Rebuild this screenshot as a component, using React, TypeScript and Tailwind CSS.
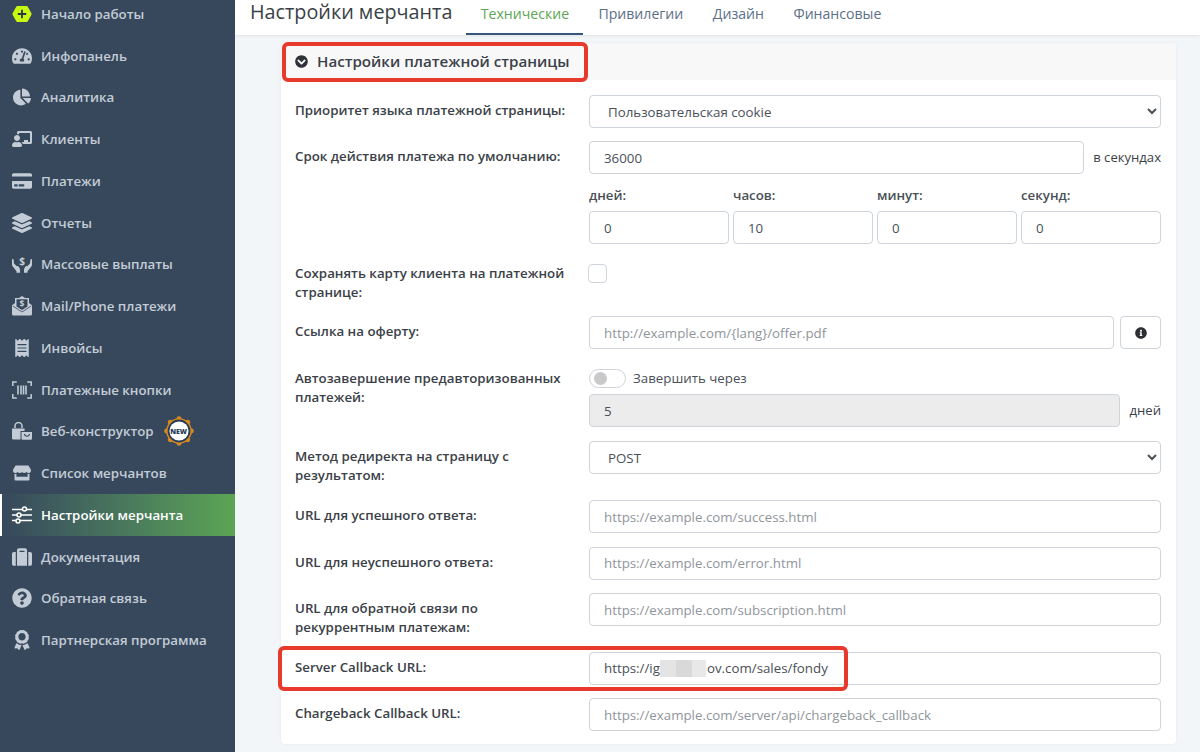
import React from "react";
import {
  FaTachometerAlt, FaChartPie, FaChalkboardTeacher, FaCreditCard, FaLayerGroup, FaReceipt, FaStore,
  FaSuitcase, FaQuestionCircle, FaAward, FaChevronCircleDown, FaInfoCircle,
} from "react-icons/fa";

const Hexagon = () => (
  <svg width="20" height="18" viewBox="0 0 20 18">
    <path d="M5.5 1h9a1.500 1.500 0 0 1 1.300.7l3.600 6.500a1.600 1.600 0 0 1 0 1.600l-3.600 6.500a1.500 1.500 0 0 1-1.300.7h-9a1.500 1.500 0 0 1-1.300-.7L.6 9.800a1.600 1.600 0 0 1 0-1.600l3.600-6.500A1.500 1.500 0 0 1 5.500 1z" fill="#c8f812" />
    <path d="M10 4.800v8.400M5.800 9h8.400" stroke="#26384a" strokeWidth="1.800" />
  </svg>
);
const Hands = () => (
  <svg width="20" height="18" viewBox="0 0 20 18" fill="currentColor">
    <path d="M0 4.500c0-.8 1.400-.8 1.600 0l.4 4 2.800 2.800c.4-.6 1.300-.3 1.900.4.900 1 1.300 2 1.300 3v3H4.500v-1.500L.8 11.500C.3 11 0 10 0 9.500z" />
    <path d="M20 4.500c0-.8-1.400-.8-1.600 0l-.4 4-2.800 2.800c-.4-.6-1.300-.3-1.900.4-.9 1-1.300 2-1.300 3v3h3.500v-1.500l3.700-4.500c.5-.5.800-1.500.8-2z" />
    <text x="10" y="10" textAnchor="middle" fontSize="10" fontWeight="700" fontFamily="Open Sans">$</text>
  </svg>
);
const EnvelopeDollar = () => (
  <svg width="20" height="20" viewBox="0 0 20 20" fill="currentColor">
    <path d="M10 0l3 2h4v5l3 2.200V18a1.500 1.500 0 0 1-1.500 1.500h-17A1.500 1.500 0 0 1 0 18V9.200L3 7V2h4z" />
    <path d="M4.500 3.300h11v7.200L10 14 4.500 10.500z" fill="#37485c" />
    <path d="M.8 10l9.200 6 9.200-6" fill="none" stroke="#37485c" strokeWidth=".8" />
    <text x="10" y="10.800" textAnchor="middle" fontSize="8.500" fontWeight="700" fontFamily="Open Sans">$</text>
  </svg>
);
const Scan = () => (
  <svg width="20" height="18" viewBox="0 0 20 18" fill="none" stroke="currentColor" strokeWidth="1.500">
    <path d="M.8 5V1h4M15.200 1h4v4M19.200 13v4h-4M4.800 17h-4v-4" />
    <path d="M6 4.500v9M9 4.500v9M11.500 4.500v9M14 4.500v9" strokeWidth="1.600" />
  </svg>
);
const BagLock = () => (
  <svg width="20" height="18" viewBox="0 0 20 18" fill="currentColor">
    <path d="M3 6V4a3.500 3.500 0 0 1 7 0v2" fill="none" stroke="currentColor" strokeWidth="1.500" />
    <path d="M0 6.500h12.500V9H8.500v8.500H1.200A1.200 1.200 0 0 1 0 16.300z" />
    <path d="M9.500 10H20v6.500a1.200 1.200 0 0 1-1.200 1.200h-8.100a1.200 1.200 0 0 1-1.200-1.200z" />
    <path d="M12.500 12c.3 3 4.700 3 5 0" fill="none" stroke="#37485c" strokeWidth="1.100" />
  </svg>
);
const Sliders = () => (
  <svg width="20" height="18" viewBox="0 0 20 18" fill="none" stroke="currentColor">
    <path d="M0 3.500h20M0 9h20M0 14.500h20" strokeWidth="1.700" />
    <g fill="#47614f" strokeWidth="1.500">
      <circle cx="12.500" cy="3" r="2" />
      <circle cx="7" cy="9" r="2" />
      <circle cx="6" cy="15" r="2" />
    </g>
  </svg>
);
const NewBadge = () => (
  <span className="relative ml-[10px] flex h-[30px] w-[30px] items-center justify-center">
    <svg className="absolute inset-0" width="30" height="30" viewBox="0 0 30 30">
      <circle cx="15" cy="15" r="12.800" fill="#d98a1e" />
      <g fill="#d98a1e">
        <circle cx="15" cy="2.600" r="2.400" /><circle cx="15" cy="27.400" r="2.400" /><circle cx="2.600" cy="15" r="2.400" /><circle cx="27.400" cy="15" r="2.400" />
        <circle cx="6.200" cy="6.200" r="2.400" /><circle cx="23.800" cy="6.200" r="2.400" /><circle cx="6.200" cy="23.800" r="2.400" /><circle cx="23.800" cy="23.800" r="2.400" />
      </g>
      <circle cx="15" cy="15" r="11.400" fill="#263c59" />
      <circle cx="15" cy="15" r="9.600" fill="#ffffff" />
    </svg>
    <span className="relative text-[7px] font-extrabold leading-none text-[#263c59]">NEW</span>
  </span>
);

const nav: { label: string; icon: React.ReactNode; badge?: boolean; active?: boolean }[] = [
  { label: "Начало работы", icon: <Hexagon /> },
  { label: "Инфопанель", icon: <FaTachometerAlt size={20} /> },
  { label: "Аналитика", icon: <FaChartPie size={18} /> },
  { label: "Клиенты", icon: <FaChalkboardTeacher size={20} /> },
  { label: "Платежи", icon: <FaCreditCard size={20} /> },
  { label: "Отчеты", icon: <FaLayerGroup size={20} /> },
  { label: "Массовые выплаты", icon: <Hands /> },
  { label: "Mail/Phone платежи", icon: <EnvelopeDollar /> },
  { label: "Инвойсы", icon: <FaReceipt size={18} /> },
  { label: "Платежные кнопки", icon: <Scan /> },
  { label: "Веб-конструктор", icon: <BagLock />, badge: true },
  { label: "Список мерчантов", icon: <FaStore size={18} /> },
  { label: "Настройки мерчанта", icon: <Sliders />, active: true },
  { label: "Документация", icon: <FaSuitcase size={20} /> },
  { label: "Обратная связь", icon: <FaQuestionCircle size={20} /> },
  { label: "Партнерская программа", icon: <FaAward size={20} /> },
];

const inputCls =
  "h-[33px] w-full rounded-[4px] border border-[#ced4da] bg-white px-[14px] text-[13.3px] text-[#495057] outline-none placeholder:text-[#8f959b]";

const Label = ({ children, className = "" }: { children: React.ReactNode; className?: string }) => (
  <div className={`w-[294px] shrink-0 pr-3 text-[13.3px] font-semibold leading-[19px] text-[#3b4148] ${className}`}>{children}</div>
);
const Row = ({ children, className = "" }: { children: React.ReactNode; className?: string }) => (
  <div className={`flex ${className}`}>{children}</div>
);
const Select = ({ value }: { value: string }) => (
  <select defaultValue={value} className={`${inputCls} !pl-[14px] !pr-[6px]`}>
    <option>{value}</option>
  </select>
);

export default function App() {
  return (
    <div className="flex h-[752px] w-[1200px] overflow-hidden bg-[#f3f6f9] font-['Open_Sans',sans-serif]">
      <aside className="h-full w-[235px] shrink-0 overflow-hidden bg-[#37485c]">
        <nav className="-mt-[7px] flex flex-col">
          {nav.map((n) => (
            <div
              key={n.label}
              className={`flex h-[41.75px] items-center pl-[12px] text-[13.3px] font-semibold ${
                n.active
                  ? "border-l-2 border-white !pl-[10px] bg-gradient-to-r from-[#37485c] to-[#5ba553] text-white"
                  : "text-[#c3ccd6]"
              }`}
            >
              <span className="flex w-[29px] shrink-0 justify-start">
                <span className="flex w-[20px] justify-center">{n.icon}</span>
              </span>
              <span className="pt-[2px]">{n.label}</span>
              {n.badge && <NewBadge />}
            </div>
          ))}
        </nav>
      </aside>

      <main className="flex min-w-0 flex-1 flex-col">
        <header className="flex h-[35px] items-center bg-white pl-[15px] shadow-[0_1px_3px_rgba(0,0,0,0.08)]">
          <h1 className="relative top-[-6px] mr-[14px] text-[19.8px] font-normal leading-[20px] text-[#3a3f45]">Настройки мерчанта</h1>
          <div className="flex h-full items-start">
            <span className="h-full w-[117px] border-b-2 border-[#37567a] pt-[3px] text-center text-[14.1px] text-[#5ba553]">Технические</span>
            <span className="pl-[15px] pr-[15px] pt-[3px] text-[14.1px] text-[#5b6f87]">Привилегии</span>
            <span className="pl-[14.5px] pr-[15px] pt-[3px] text-[14.1px] text-[#5b6f87]">Дизайн</span>
            <span className="pl-[14.5px] pt-[3px] text-[14.1px] text-[#5b6f87]">Финансовые</span>
          </div>
        </header>

        <section className="ml-[46px] mt-[8px] h-[701px] w-[895px] rounded-[4px] bg-white shadow-[0_0_3px_rgba(0,0,0,0.06)]">
          <div className="relative flex h-[37px] items-center bg-[#f8f8f8] pl-[14px] text-[15.15px] font-semibold text-[#3b4148]">
            <FaChevronCircleDown size={13} className="mr-[9px] text-[#2f3338]" />
            Настройки платежной страницы
            <div className="absolute left-[1px] top-[-1px] h-[40px] w-[306px] rounded-[6px] border-[4px] border-[#e8392d]" />
          </div>

          <div className="px-[14px] pt-[15px]">
            <Row className="h-[46px] w-[866px]">
              <Label className="pt-[6px]">Приоритет языка платежной страницы:</Label>
              <div className="w-[572px]"><Select value="Пользовательская cookie" /></div>
            </Row>
            <Row className="h-[123px] w-[866px]">
              <Label className="pt-[6px]">Срок действия платежа по умолчанию:</Label>
              <div className="w-[572px]">
                <div className="flex items-center gap-[9px]">
                  <input readOnly value="36000" className={inputCls} />
                  <span className="shrink-0 text-[13.1px] text-[#3b4148]">в секундах</span>
                </div>
                <div className="mt-[12px] grid grid-cols-4 gap-[4px]">
                  {[["дней:", "0"], ["часов:", "10"], ["минут:", "0"], ["секунд:", "0"]].map(([l, v]) => (
                    <div key={l}>
                      <div className="mb-[6px] h-[19px] text-[13.3px] font-semibold text-[#495057]">{l}</div>
                      <input readOnly value={v} className={inputCls} />
                    </div>
                  ))}
                </div>
              </div>
            </Row>
            <Row className="h-[52px] w-[866px]">
              <Label>Сохранять карту клиента на платежной странице:</Label>
              <div className="-ml-px h-[19px] w-[19px] rounded-[4px] border border-[#ced4da] bg-white" />
            </Row>
            <Row className="h-[53px] w-[866px]">
              <Label className="pt-[6px]">Ссылка на оферту:</Label>
              <div className="flex w-[572px] gap-[6px]">
                <input readOnly placeholder="http://example.com/{lang}/offer.pdf" className={inputCls} />
                <button className="flex h-[33px] w-[41px] shrink-0 items-center justify-center rounded-[4px] border border-[#ced4da] bg-white text-[#2b2f33]">
                  <FaInfoCircle size={12} />
                </button>
              </div>
            </Row>
            <Row className="h-[72px] w-[866px]">
              <Label>Автозавершение предавторизованных платежей:</Label>
              <div className="w-[572px]">
                <div className="flex h-[19px] items-center gap-[7px]">
                  <div className="flex h-[19px] w-[37px] items-center rounded-full border border-[#ced4da] bg-white pl-[4px]">
                    <div className="h-[13px] w-[13px] rounded-full bg-[#c9c9c9]" />
                  </div>
                  <span className="text-[13.3px] text-[#495057]">Завершить через</span>
                </div>
                <div className="mt-[6px] flex items-center gap-[10px]">
                  <input readOnly disabled value="5" className={`${inputCls} !bg-[#ececec]`} />
                  <span className="shrink-0 text-[13.1px] text-[#3b4148]">дней</span>
                </div>
              </div>
            </Row>
            <Row className="h-[59px] w-[866px]">
              <Label className="pt-[6px]">Метод редиректа на страницу с результатом:</Label>
              <div className="w-[572px]"><Select value="POST" /></div>
            </Row>
            <Row className="h-[46.5px] w-[866px]">
              <Label className="pt-[6px]">URL для успешного ответа:</Label>
              <div className="w-[572px]"><input readOnly placeholder="https://example.com/success.html" className={inputCls} /></div>
            </Row>
            <Row className="h-[46.5px] w-[866px]">
              <Label className="pt-[6px]">URL для неуспешного ответа:</Label>
              <div className="w-[572px]"><input readOnly placeholder="https://example.com/error.html" className={inputCls} /></div>
            </Row>
            <Row className="h-[59px] w-[866px]">
              <Label className="pt-[6px]">URL для обратной связи по рекуррентным платежам:</Label>
              <div className="w-[572px]"><input readOnly placeholder="https://example.com/subscription.html" className={inputCls} /></div>
            </Row>
            <Row className="relative h-[46px] w-[866px]">
              <Label className="pt-[6px]">Server Callback URL:</Label>
              <div className="flex h-[33px] w-[572px] items-center rounded-[4px] border border-[#ced4da] bg-white pl-[14px] text-[13.3px] text-[#495057]">
                <span>https://ig</span>
                <span className="flex h-[17px] w-[46px]">
                  <span className="w-[16px] bg-[#e4e4e4]" />
                  <span className="w-[16px] bg-[#d9d9d9]" />
                  <span className="w-[14px] bg-[#e8e8e8]" />
                </span>
                <span className="ml-[1px]">ov.com/sales/fondy</span>
              </div>
              <div className="absolute left-[-17px] top-[-6px] h-[45px] w-[570px] rounded-[6px] border-[4px] border-[#e8392d]" />
            </Row>
            <Row className="w-[866px]">
              <Label className="pt-[6px]">Chargeback Callback URL:</Label>
              <div className="w-[572px]"><input readOnly placeholder="https://example.com/server/api/chargeback_callback" className={inputCls} /></div>
            </Row>
          </div>
        </section>
      </main>
    </div>
  );
}
